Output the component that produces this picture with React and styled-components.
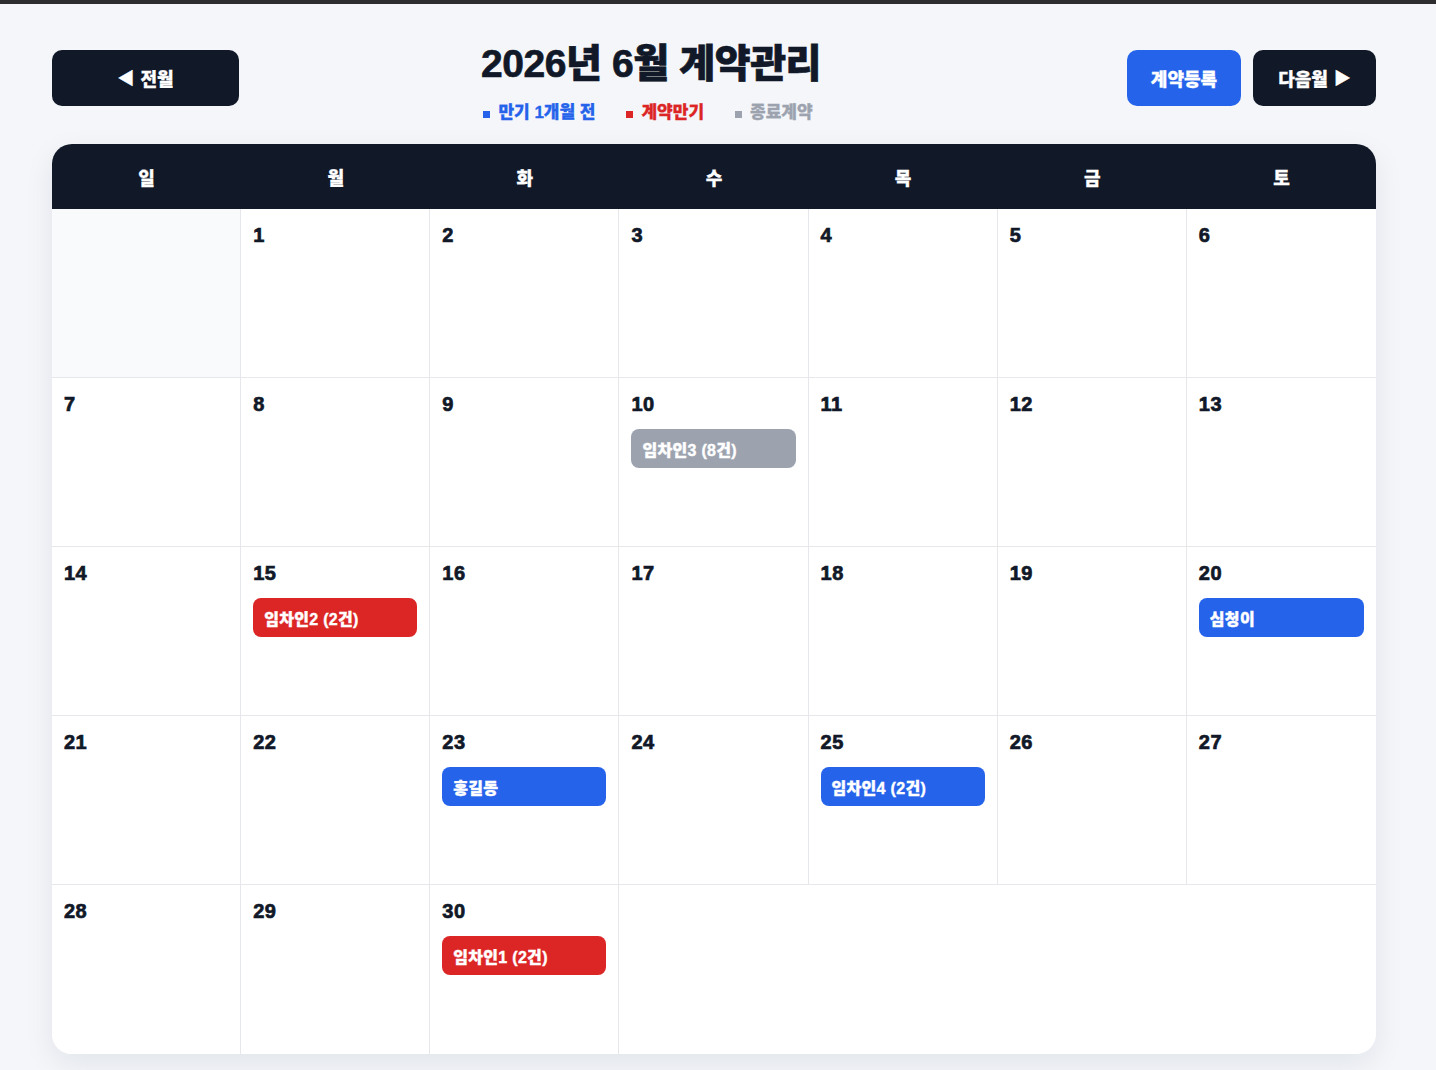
import React from 'react';
import styled, { createGlobalStyle } from 'styled-components';

const GlobalStyle = createGlobalStyle`
  html, body {
    margin: 0;
    padding: 0;
    background: #f4f6fa;
  }
  body {
    font-family: "Liberation Sans", "Noto Sans CJK KR", sans-serif;
    color: #111827;
  }
`;

const TopStrip = styled.div`
  height: 4px;
  background: #2d2d2f;
`;

const Page = styled.div`
  width: 1324px;
  padding: 46px 0 16px 52px;
`;

const Toolbar = styled.div`
  display: flex;
  justify-content: space-between;
  align-items: flex-start;
  margin-bottom: 21px;
`;

const ButtonGroup = styled.div`
  display: flex;
  gap: 12px;
`;

const NavButton = styled.button`
  height: 56px;
  min-width: ${({ $w }) => $w}px;
  padding: 0 20px;
  border: none;
  border-radius: 10px;
  background: ${({ $blue }) => ($blue ? '#2563eb' : '#111827')};
  color: #fff;
  font-family: inherit;
  font-size: 18px;
  font-weight: 800;
  -webkit-text-stroke: 0.3px #fff;
  display: flex;
  align-items: center;
  justify-content: center;
  gap: 6px;
  cursor: pointer;
`;

const Arrow = styled.span`
  font-size: 17px;
  line-height: 1;
`;

const TitleBlock = styled.div`
  display: flex;
  flex-direction: column;
  align-items: center;
  margin: -6px 0 0 -64px;
`;

const Title = styled.h1`
  margin: 0;
  font-size: 39px;
  font-weight: 900;
  letter-spacing: -0.4px;
  line-height: 40px;
  -webkit-text-stroke: 0.7px #111827;
`;

const Legend = styled.div`
  display: flex;
  gap: 31px;
  margin: 19px 0 0 -6px;
  font-size: 17px;
  font-weight: 800;
  line-height: 20px;
`;

const LegendItem = styled.span`
  display: flex;
  align-items: center;
  color: ${({ $c }) => $c};
  -webkit-text-stroke: 0.3px ${({ $c }) => $c};
  &::before {
    content: '';
    width: 7px;
    height: 7px;
    background: ${({ $c }) => $c};
    margin: 2px 8px 0 0;
  }
`;

const Calendar = styled.div`
  background: #fff;
  border-radius: 20px;
  overflow: hidden;
  box-shadow: 0 10px 30px rgba(17, 24, 39, 0.08);
`;

const WeekHead = styled.div`
  display: grid;
  grid-template-columns: repeat(7, 1fr);
  background: #111827;
  height: 65px;
`;

const WeekDay = styled.div`
  display: flex;
  align-items: center;
  justify-content: center;
  color: #fff;
  font-size: 18px;
  font-weight: 800;
  -webkit-text-stroke: 0.3px #fff;
`;

const Grid = styled.div`
  display: grid;
  grid-template-columns: repeat(7, 1fr);
  grid-auto-rows: 169px;
`;

const Cell = styled.div`
  box-sizing: border-box;
  padding: 14px 12px;
  border-right: ${({ $last }) => ($last ? 'none' : '1px solid #e5e7eb')};
  border-bottom: ${({ $bottom }) => ($bottom ? 'none' : '1px solid #e5e7eb')};
  background: ${({ $blank }) => ($blank ? '#f9fafb' : '#fff')};
`;

const DayNum = styled.div`
  font-size: 20px;
  font-weight: 900;
  line-height: 24px;
  color: #111827;
  letter-spacing: 0.5px;
  -webkit-text-stroke: 0.7px #111827;
`;

const Event = styled.div`
  margin-top: 13px;
  height: 39px;
  border-radius: 8px;
  background: ${({ $kind }) =>
    $kind === 'red' ? '#dc2626' : $kind === 'gray' ? '#9ca3af' : '#2563eb'};
  color: #fff;
  font-size: 16px;
  font-weight: 800;
  letter-spacing: 0.3px;
  -webkit-text-stroke: 0.4px #fff;
  display: flex;
  align-items: center;
  padding: 0 11px;
`;

const weekdays = ['일', '월', '화', '수', '목', '금', '토'];

const events = {
  10: { label: '임차인3 (8건)', kind: 'gray' },
  15: { label: '임차인2 (2건)', kind: 'red' },
  20: { label: '심청이', kind: 'blue' },
  23: { label: '홍길동', kind: 'blue' },
  25: { label: '임차인4 (2건)', kind: 'blue' },
  30: { label: '임차인1 (2건)', kind: 'red' },
};

// June 2026 starts on a Monday, 30 days
const firstDay = 1;
const daysInMonth = 30;

export default function App() {
  const cells = [];
  for (let i = 0; i < firstDay; i++) cells.push(null);
  for (let d = 1; d <= daysInMonth; d++) cells.push(d);
  const lastRowStart = Math.floor((cells.length - 1) / 7) * 7;

  return (
    <>
      <GlobalStyle />
      <TopStrip />
      <Page>
        <Toolbar>
          <NavButton $w={187}>
            <Arrow>◀</Arrow> 전월
          </NavButton>
          <TitleBlock>
            <Title>2026년 6월 계약관리</Title>
            <Legend>
              <LegendItem $c="#2563eb">만기 1개월 전</LegendItem>
              <LegendItem $c="#dc2626">계약만기</LegendItem>
              <LegendItem $c="#9ca3af">종료계약</LegendItem>
            </Legend>
          </TitleBlock>
          <ButtonGroup>
            <NavButton $blue $w={114}>계약등록</NavButton>
            <NavButton $w={123}>
              다음월 <Arrow>▶</Arrow>
            </NavButton>
          </ButtonGroup>
        </Toolbar>

        <Calendar>
          <WeekHead>
            {weekdays.map((w) => (
              <WeekDay key={w}>{w}</WeekDay>
            ))}
          </WeekHead>
          <Grid>
            {cells.map((d, i) => {
              const ev = d && events[d];
              return (
                <Cell
                  key={i}
                  $blank={d === null}
                  $last={i % 7 === 6}
                  $bottom={i >= lastRowStart}
                >
                  {d && <DayNum>{d}</DayNum>}
                  {ev && <Event $kind={ev.kind}>{ev.label}</Event>}
                </Cell>
              );
            })}
          </Grid>
        </Calendar>
      </Page>
    </>
  );
}
